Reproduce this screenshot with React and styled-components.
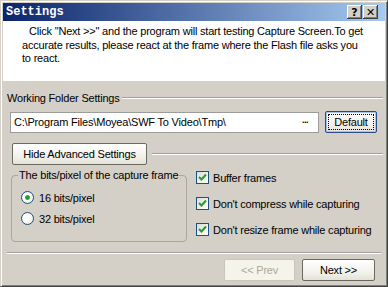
import React from 'react'
import styled, { createGlobalStyle } from 'styled-components'

const Global = createGlobalStyle`
  html, body {
    margin: 0;
    padding: 0;
    background: #d4d0c8;
  }
  * {
    box-sizing: border-box;
  }
`

const Window = styled.div`
  width: 388px;
  height: 287px;
  display: flex;
  flex-direction: column;
  background: #d4d0c8;
  border: 1px solid;
  border-color: #d4d0c8 #404040 #404040 #d4d0c8;
  box-shadow: inset 1px 1px #fff, inset -1px -1px #808080;
  padding: 2px;
  font-family: 'Liberation Sans', Arial, sans-serif;
  font-size: 11px;
  letter-spacing: -0.2px;
  white-space: nowrap;
  color: #000;
`

const TitleBar = styled.div`
  height: 18px;
  display: flex;
  align-items: center;
  padding: 0 7px 0 3px;
  background: linear-gradient(to right, #0a246a, #a6caf0);
`

const Title = styled.div`
  flex: 1;
  color: #fff;
  font-family: 'Liberation Mono', 'Courier New', monospace;
  font-weight: bold;
  font-size: 12px;
  letter-spacing: 0;
`

const CaptionBtn = styled.div`
  width: 15px;
  height: 14px;
  margin-left: 1px;
  display: flex;
  align-items: center;
  justify-content: center;
  background: #d4d0c8;
  box-shadow: inset -1px -1px #404040, inset 1px 1px #fff,
    inset -2px -2px #808080, inset 2px 2px #d4d0c8;
  font-family: 'DejaVu Sans', sans-serif;
  font-weight: bold;
  font-size: 11px;
  letter-spacing: 0;
  line-height: 1;
`

const Info = styled.div`
  height: 60px;
  background: #fff;
  padding: 4px 10px 0 19px;
  line-height: 13.5px;
`

const Indent = styled.span`
  padding-left: 7px;
`

const Body = styled.div`
  display: flex;
  flex-direction: column;
  padding: 0 2px 0 4px;
`

const SectionHead = styled.div`
  margin-top: 10px;
  height: 14px;
  display: flex;
  align-items: center;
  gap: 2px;
`

const Etched = styled.div`
  flex: 1;
  height: 2px;
  border-top: 1px solid #a0a0a0;
  border-bottom: 1px solid #fff;
`

const EditRow = styled.div`
  margin-top: 6px;
  display: flex;
  align-items: center;
  padding-left: 3px;
`

const Edit = styled.div`
  width: 309px;
  height: 21px;
  display: flex;
  align-items: center;
  justify-content: space-between;
  padding: 0 10px 0 3px;
  background: #fff;
  border: 1px solid #9c9c9c;
`

const Dots = styled.span`
  font-weight: bold;
  font-size: 9px;
  letter-spacing: -0.5px;
  position: relative;
  top: -2px;
`

const Button = styled.div`
  position: relative;
  width: ${(p) => p.$w}px;
  height: ${(p) => p.$h || 22}px;
  display: flex;
  align-items: center;
  justify-content: center;
  border: 1px solid ${(p) => (p.$disabled ? '#c9c7ba' : '#6b6a5f')};
  border-radius: 2px;
  background: ${(p) =>
    p.$disabled ? '#f5f4ea' : 'linear-gradient(#ffffff, #f0efe8 70%, #e3e1d8)'};
  color: ${(p) => (p.$disabled ? '#aca899' : '#000')};
`

const DefaultButton = styled(Button)`
  margin-left: 6px;
  border-color: #2b4a8c;
  box-shadow: inset 0 0 0 1px #a9c2ee;
  &::after {
    content: '';
    position: absolute;
    inset: 2px;
    border: 1px dotted #000;
  }
`

const HideRow = styled.div`
  margin-top: 10px;
  display: flex;
  align-items: center;
  gap: 5px;
  padding-left: 5px;
`

const Options = styled.div`
  margin-top: 4px;
  display: flex;
  padding-left: 4px;
`

const Group = styled.fieldset`
  margin: 0;
  width: 176px;
  height: 73px;
  padding: 0 0 0 6px;
  border: 1px solid #aaa79c;
  border-radius: 4px;
  display: flex;
  flex-direction: column;
  gap: 8px;
`

const Legend = styled.legend`
  padding: 0 1px;
  line-height: 13px;
`

const Choice = styled.div`
  display: flex;
  align-items: center;
  gap: 5px;
  height: 13px;
  padding-left: 3px;
  margin-top: ${(p) => p.$top || 0}px;
`

const Radio = styled.span`
  width: 13px;
  height: 13px;
  border-radius: 50%;
  border: 1px solid #1c5180;
  background: radial-gradient(circle at 40% 40%, #fff 30%, #e2e1da);
  display: flex;
  align-items: center;
  justify-content: center;
  &::after {
    content: '';
    width: 5px;
    height: 5px;
    border-radius: 50%;
    background: ${(p) => (p.$on ? 'radial-gradient(circle, #21a121 40%, #5ed05e)' : 'transparent')};
  }
`

const Checks = styled.div`
  display: flex;
  flex-direction: column;
  gap: 13px;
  margin-left: 6px;
  padding-top: 2px;
`

const CheckRow = styled(Choice)`
  gap: 4px;
`

const Box = styled.span`
  width: 13px;
  height: 13px;
  border: 1px solid #1c5180;
  background: linear-gradient(135deg, #dcdcd7, #fff);
  display: flex;
  align-items: center;
  justify-content: center;
`

const Footer = styled.div`
  margin-top: 10px;
  display: flex;
  flex-direction: column;
  padding-right: 2px;
`

const ButtonRow = styled.div`
  margin-top: 5px;
  display: flex;
  justify-content: flex-end;
  gap: 7px;
  padding-right: 6px;
`

const Check = () => (
  <svg width='9' height='9' viewBox='0 0 9 9'>
    <path d='M1 4 L3.5 6.5 L8 1.5' fill='none' stroke='#21a121' strokeWidth='2' />
  </svg>
)

const CheckItem = ({ children }) => (
  <CheckRow>
    <Box>
      <Check />
    </Box>
    {children}
  </CheckRow>
)

export default function App() {
  return (
    <>
      <Global />
      <Window>
        <TitleBar>
          <Title>Settings</Title>
          <CaptionBtn>?</CaptionBtn>
          <CaptionBtn>✕</CaptionBtn>
        </TitleBar>
        <Info>
          <Indent>Click "Next &gt;&gt;" and the program will start testing Capture Screen.To get</Indent>
          <br />
          accurate results, please react at the frame where the Flash file asks you
          <br />
          to react.
        </Info>
        <Body>
          <SectionHead>
            Working Folder Settings
            <Etched />
          </SectionHead>
          <EditRow>
            <Edit>
              <span>C:\Program Files\Moyea\SWF To Video\Tmp\</span>
              <Dots>...</Dots>
            </Edit>
            <DefaultButton $w={52} $h={22}>Default</DefaultButton>
          </EditRow>
          <HideRow>
            <Button $w={135}>Hide Advanced Settings</Button>
            <Etched />
          </HideRow>
          <Options>
            <Group>
              <Legend>The bits/pixel of the capture frame</Legend>
              <Choice $top={9}>
                <Radio $on />
                16 bits/pixel
              </Choice>
              <Choice>
                <Radio />
                32 bits/pixel
              </Choice>
            </Group>
            <Checks>
              <CheckItem>Buffer frames</CheckItem>
              <CheckItem>Don't compress while capturing</CheckItem>
              <CheckItem>Don't resize frame while capturing</CheckItem>
            </Checks>
          </Options>
          <Footer>
            <Etched />
            <ButtonRow>
              <Button $w={71} $disabled>&lt;&lt; Prev</Button>
              <Button $w={73}>Next &gt;&gt;</Button>
            </ButtonRow>
          </Footer>
        </Body>
      </Window>
    </>
  )
}
